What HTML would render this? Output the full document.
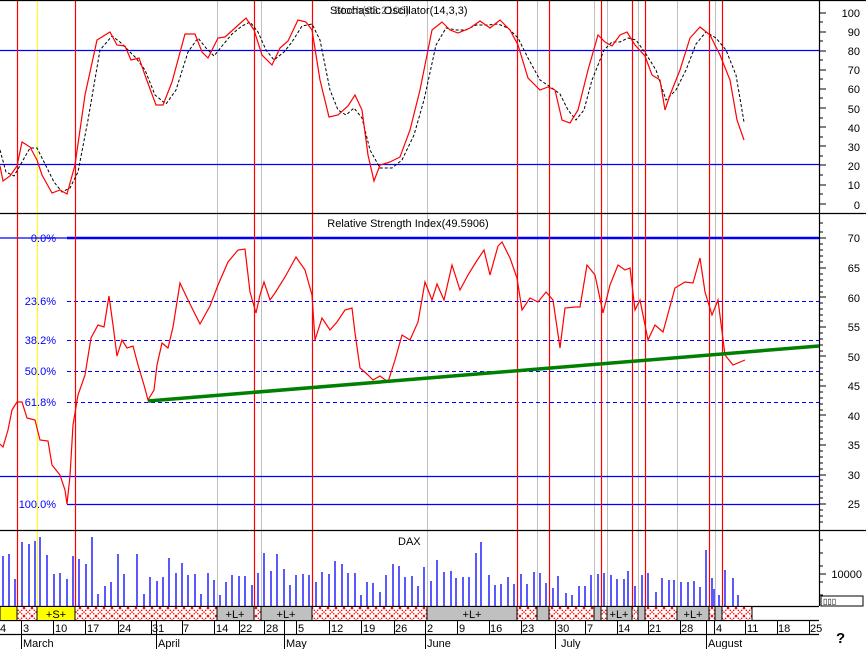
<!DOCTYPE html>
<html><head><meta charset="utf-8"><style>
html,body{margin:0;padding:0;background:#fff;}
svg{display:block;font-family:"Liberation Sans",sans-serif;}
</style></head><body>
<svg width="866" height="649" viewBox="0 0 866 649" xmlns="http://www.w3.org/2000/svg">
<defs>
<pattern id="hx" width="8" height="8" patternUnits="userSpaceOnUse">
<rect width="8" height="8" fill="#fff"/>
<path d="M0 0L8 8M8 0L0 8" stroke="#f00" stroke-width="1.2" stroke-dasharray="1.5 1"/>
</pattern>
</defs>
<!-- vertical grid gray -->
<g stroke="#c0c0c0" stroke-width="1">
<path d="M217.5 0V606M261.5 0V606M427.5 0V606M537.5 0V606M594.5 0V606M607.5 0V606M638.5 0V606M677.5 0V606M715.5 0V606"/>
</g>
<path d="M37.5 0V606" stroke="#ffff00"/>
<!-- top panel horiz -->
<g stroke="#00f" stroke-width="1.2">
<path d="M0 50.5H819M0 164.5H819"/>
<path d="M0 476.5H819M67 504.5H819M0 238H67"/>
</g>
<path d="M67 238H819" stroke="#00f" stroke-width="2.5"/>
<g stroke="#00f" stroke-dasharray="4 3">
<path d="M67 301.5H819M67 340.5H819M67 371.5H819M67 402.5H819"/>
</g>
<!-- red verticals -->
<g stroke="#f00" stroke-width="1.2">
<path d="M17.5 0V606M75.5 0V606M254.5 0V606M312.5 0V606M517.5 0V606M549.5 0V606M601.5 0V606M632.5 0V606M645.5 0V606M709.5 0V606M722.5 0V606"/>
</g>
<!-- panel borders -->
<g stroke="#000" stroke-width="1.2">
<path d="M0 0.5H866M0 213.5H866M0 530.5H866M819.5 0V606M0 606.5H819M0 620.5H819M0 634.5H819"/>
</g>
<!-- right axis ticks -->
<g stroke="#000">
<path d="M819 13H826M819 22H823M819 32H826M819 41H823M819 51H826M819 60H823M819 70H826M819 79H823M819 89H826M819 98H823M819 108H826M819 118H823M819 127H826M819 137H823M819 146H826M819 156H823M819 165H826M819 175H823M819 185H826M819 194H823M819 204H826"/>
<path d="M819 238H826M819 268H826M819 297H826M819 327H826M819 356H826M819 386H826M819 415H826M819 445H826M819 475H826M819 504H826M819 223H823M819 232H823M819 244H823M819 250H823M819 256H823M819 262H823M819 274H823M819 280H823M819 286H823M819 292H823M819 303H823M819 309H823M819 315H823M819 321H823M819 333H823M819 339H823M819 345H823M819 351H823M819 362H823M819 368H823M819 374H823M819 380H823M819 392H823M819 398H823M819 404H823M819 410H823M819 421H823M819 427H823M819 433H823M819 439H823M819 451H823M819 457H823M819 463H823M819 469H823M819 480H823M819 486H823M819 492H823M819 498H823M819 510H823M819 516H823M819 522H823"/>
<path d="M819 540H823M819 553H823M819 566H823M819 574H826M819 582H823M819 595H823"/>
</g>
<g font-size="11" fill="#000" text-anchor="end">
<text x="860" y="17">100</text><text x="860" y="36">90</text><text x="860" y="55">80</text><text x="860" y="74">70</text><text x="860" y="93">60</text><text x="860" y="113">50</text><text x="860" y="132">40</text><text x="860" y="151">30</text><text x="860" y="170">20</text><text x="860" y="189">10</text><text x="860" y="209">0</text>
<text x="860" y="242">70</text><text x="860" y="272">65</text><text x="860" y="302">60</text><text x="860" y="331">55</text><text x="860" y="361">50</text><text x="860" y="390">45</text><text x="860" y="420">40</text><text x="860" y="449">35</text><text x="860" y="479">30</text><text x="860" y="508">25</text>
<text x="862" y="578">10000</text>
</g>
<rect x="821" y="596" width="42" height="10" fill="#fff" stroke="#000"/>
<text x="823" y="604" font-size="8">▯▯▯</text>
<!-- fib labels -->
<g font-size="11" fill="#00f" text-anchor="end">
<text x="56" y="242">0.0%</text><text x="56" y="305">23.6%</text><text x="56" y="344">38.2%</text><text x="56" y="375">50.0%</text><text x="56" y="406">61.8%</text><text x="56" y="508">100.0%</text>
</g>
<!-- titles -->
<text x="330" y="14" font-size="11" fill="#000">Stochastic Oscillator(14,3,3)</text>
<text x="334" y="14" font-size="11" fill="#000" opacity="0.6">Stoch(63.2106)</text>
<text x="408" y="227" font-size="11" text-anchor="middle">Relative Strength Index(49.5906)</text>
<text x="398" y="545" font-size="11">DAX</text>
<!-- stochastic dashed -->
<polyline fill="none" stroke="#000" stroke-dasharray="3 2" points="0,150 6,172 14,176 22,162 30,148 37,148 44,162 54,182 62,192 70,188 78,172 88,120 100,50 112,36 120,42 128,50 136,58 145,70 155,95 166,104 176,90 188,52 198,38 206,48 214,56 222,46 232,34 242,26 250,22 258,32 266,50 274,60 284,52 292,42 302,26 312,24 320,40 330,90 338,110 346,115 354,108 362,118 370,150 380,168 392,168 402,160 414,135 424,100 436,45 446,28 456,30 466,30 476,25 488,25 498,24 508,28 518,38 528,58 540,80 552,88 560,94 568,110 576,120 584,110 592,80 604,50 612,42 620,42 628,38 636,40 646,54 656,70 666,100 676,90 686,70 696,44 706,32 716,38 726,50 736,75 744,122"/>
<!-- stochastic red -->
<polyline fill="none" stroke="#f00" stroke-width="1.2" points="0,166 3,181 10,176 17,166 22,142 30,147 37,160 42,175 52,193 60,190 67,194 75,165 85,95 97,40 110,32 117,45 125,46 131,60 139,58 146,78 156,105 163,105 172,82 185,34 195,34 202,52 208,58 218,38 225,37 235,28 246,18 254,30 262,55 272,65 280,48 288,41 298,20 306,22 312,30 320,80 329,117 338,115 348,106 355,95 362,110 368,155 374,181 380,165 390,162 400,157 410,130 420,90 432,30 442,22 450,30 458,33 470,28 480,21 490,28 500,20 510,30 518,45 528,78 540,90 548,87 555,90 562,120 570,123 578,110 588,70 598,35 605,42 612,46 620,35 627,32 635,45 645,56 652,75 660,80 665,110 670,95 680,70 690,38 700,27 710,35 720,55 730,80 737,120 744,140"/>
<!-- RSI red -->
<polyline fill="none" stroke="#f00" stroke-width="1.2" points="0,444 3,447 8,430 12,410 17,402 22,402 27,418 35,420 40,440 48,441 52,465 60,475 65,490 67,504 70,476 73,425 78,395 85,375 91,338 98,325 104,327 109,296 113,325 117,356 122,340 127,348 133,346 138,365 144,385 148,400 154,390 157,365 162,343 168,348 173,327 180,283 188,300 200,324 210,306 218,285 228,262 238,250 245,249 250,292 256,313 260,295 264,282 270,300 275,293 285,277 296,257 305,270 312,295 315,340 322,318 330,330 337,322 345,310 352,308 355,333 360,368 368,375 373,380 380,376 388,382 395,360 402,335 410,340 418,322 425,282 432,300 437,284 444,300 452,265 460,290 468,275 476,262 484,250 490,275 498,246 502,242 510,258 517,278 522,310 530,298 538,302 546,292 553,300 560,348 565,308 575,307 580,307 587,265 595,275 603,313 610,285 618,265 625,270 630,268 635,310 640,300 648,340 655,325 663,332 675,288 685,282 693,283 700,258 705,292 712,315 718,300 725,355 733,365 745,360"/>
<!-- green trend -->
<path d="M148 401L819 346" stroke="#008000" stroke-width="3.5"/>
<!-- volume bars -->
<path stroke="#00f" stroke-width="1.3" d="M3 556V606M9 554V606M15 579V606M22 542V606M29 544V606M35 541V606M40 537V606M47 555V606M54 574V606M60 573V606M67 579V606M73 556V606M79 559V606M86 564V606M92 537V606M98 594V606M105 586V606M111 582V606M118 554V606M124 574V606M137 554V606M144 594V606M150 577V606M157 581V606M163 577V606M169 558V606M176 573V606M182 563V606M188 575V606M195 574V606M201 594V606M208 573V606M214 580V606M220 595V606M226 582V606M232 575V606M239 576V606M245 576V606M252 585V606M258 573V606M264 553V606M271 571V606M277 554V606M284 569V606M290 585V606M296 575V606M303 574V606M309 575V606M316 582V606M322 572V606M329 574V606M335 561V606M342 564V606M348 573V606M355 573V606M361 595V606M367 582V606M373 583V606M380 592V606M386 575V606M393 564V606M399 566V606M405 577V606M412 576V606M418 586V606M424 567V606M431 581V606M437 560V606M444 572V606M451 571V606M456 578V606M463 577V606M469 577V606M476 553V606M481 542V606M489 575V606M495 585V606M501 584V606M508 577V606M514 584V606M521 574V606M527 584V606M534 572V606M540 573V606M546 583V606M553 588V606M558 576V606M566 593V606M572 595V606M579 586V606M585 586V606M591 575V606M598 574V606M604 573V606M611 575V606M617 579V606M624 579V606M628 571V606M635 586V606M642 575V606M648 573V606M656 592V606M662 578V606M669 580V606M674 580V606M681 582V606M688 582V606M694 581V606M700 587V606M706 550V606M712 578V606M714 589V606M719 595V606M725 570V606M733 578V606M738 595V606"/>
<!-- band row -->
<g stroke="#000" stroke-width="1">
<rect x="0" y="606.5" width="17" height="14" fill="#ff0"/>
<rect x="17" y="606.5" width="20" height="14" fill="url(#hx)"/>
<rect x="37" y="606.5" width="38" height="14" fill="#ff0"/>
<rect x="75" y="606.5" width="142" height="14" fill="url(#hx)"/>
<rect x="217" y="606.5" width="37" height="14" fill="#c0c0c0"/>
<rect x="254" y="606.5" width="7" height="14" fill="url(#hx)"/>
<rect x="261" y="606.5" width="51" height="14" fill="#c0c0c0"/>
<rect x="312" y="606.5" width="115" height="14" fill="url(#hx)"/>
<rect x="427" y="606.5" width="90" height="14" fill="#c0c0c0"/>
<rect x="517" y="606.5" width="20" height="14" fill="url(#hx)"/>
<rect x="537" y="606.5" width="12" height="14" fill="#c0c0c0"/>
<rect x="549" y="606.5" width="45" height="14" fill="url(#hx)"/>
<rect x="594" y="606.5" width="7" height="14" fill="#c0c0c0"/>
<rect x="601" y="606.5" width="6" height="14" fill="url(#hx)"/>
<rect x="607" y="606.5" width="25" height="14" fill="#c0c0c0"/>
<rect x="632" y="606.5" width="6" height="14" fill="url(#hx)"/>
<rect x="638" y="606.5" width="7" height="14" fill="#c0c0c0"/>
<rect x="645" y="606.5" width="32" height="14" fill="url(#hx)"/>
<rect x="677" y="606.5" width="32" height="14" fill="#c0c0c0"/>
<rect x="709" y="606.5" width="6" height="14" fill="url(#hx)"/>
<rect x="715" y="606.5" width="7" height="14" fill="#c0c0c0"/>
<rect x="722" y="606.5" width="30" height="14" fill="url(#hx)"/>
</g>
<g font-size="11" text-anchor="middle">
<text x="56" y="618">+S+</text><text x="235" y="618">+L+</text><text x="286" y="618">+L+</text><text x="472" y="618">+L+</text><text x="619" y="618">+L+</text><text x="693" y="618">+L+</text>
</g>
<!-- date ticks -->
<path stroke="#000" d="M21.5 620V649M53.5 620V634M85.5 620V634M118.5 620V634M151.5 620V634M156.5 620V649M182.5 620V634M214.5 620V634M239.5 620V634M264.5 620V634M284.5 620V649M296.5 620V634M329.5 620V634M361.5 620V634M394.5 620V634M425.5 620V649M457.5 620V634M489.5 620V634M521.5 620V634M555.5 620V649M585.5 620V634M617.5 620V634M648.5 620V634M680.5 620V634M706.5 620V649M714.5 620V634M745.5 620V634M777.5 620V634M809.5 620V634"/>
<g font-size="11">
<text x="0" y="632">4</text><text x="23" y="632">3</text><text x="55" y="632">10</text><text x="87" y="632">17</text><text x="119" y="632">24</text><text x="152" y="632">31</text><text x="183" y="632">7</text><text x="216" y="632">14</text><text x="240" y="632">22</text><text x="266" y="632">28</text><text x="298" y="632">5</text><text x="331" y="632">12</text><text x="363" y="632">19</text><text x="395" y="632">26</text><text x="427" y="632">2</text><text x="459" y="632">9</text><text x="490" y="632">16</text><text x="522" y="632">23</text><text x="557" y="632">30</text><text x="587" y="632">7</text><text x="618" y="632">14</text><text x="649" y="632">21</text><text x="681" y="632">28</text><text x="716" y="632">4</text><text x="747" y="632">11</text><text x="778" y="632">18</text><text x="810" y="632">25</text>
<text x="23" y="647">March</text><text x="158" y="647">April</text><text x="286" y="647">May</text><text x="427" y="647">June</text><text x="561" y="647">July</text><text x="708" y="647">August</text>
</g>
<text x="836" y="643" font-size="15" font-weight="bold">?</text>
</svg>
</body></html>
